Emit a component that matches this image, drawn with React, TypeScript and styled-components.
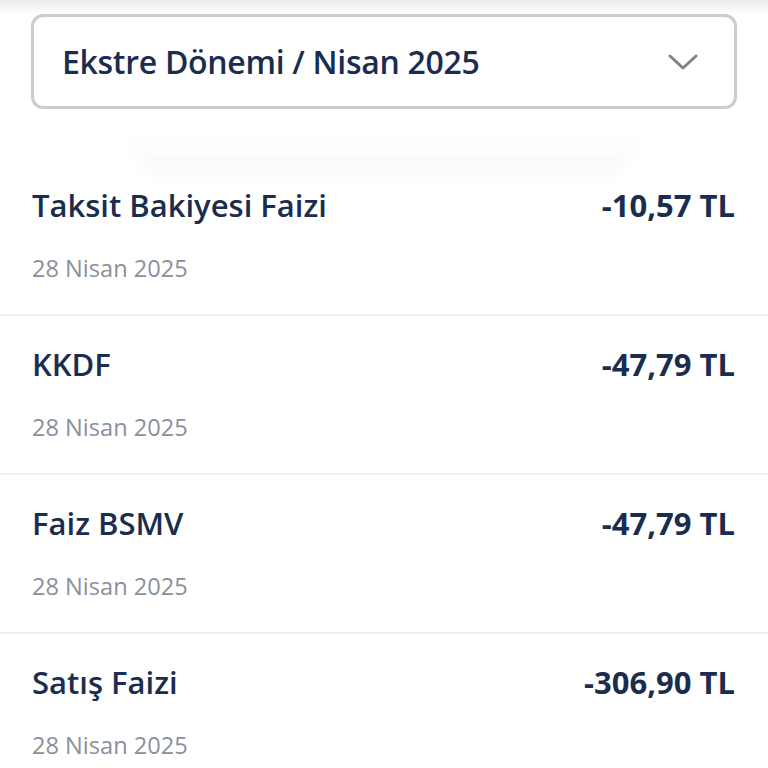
import React from "react";
import styled, { createGlobalStyle } from "styled-components";

const Global = createGlobalStyle`
  html, body { margin: 0; padding: 0; background: #ffffff; }
  body { font-family: "Open Sans", "Noto Sans", sans-serif; -webkit-font-smoothing: antialiased; }
`;

const Page = styled.div`
  width: 768px;
  height: 768px;
  overflow: hidden;
  background: #ffffff;
  position: relative;
`;

const TopShade = styled.div`
  position: absolute;
  left: 0;
  right: 0;
  top: 0;
  height: 16px;
  background: linear-gradient(#ededed, rgba(255, 255, 255, 0));
  pointer-events: none;
`;

const Header = styled.div`
  padding: 14px 31px 0 31px;
  position: relative;
  z-index: 1;
`;

const Select = styled.div`
  height: 95px;
  box-sizing: border-box;
  border: 3px solid #c9ccd0;
  border-radius: 12px;
  background: #ffffff;
  display: flex;
  align-items: center;
  justify-content: space-between;
  padding: 0 36px 0 28px;
`;

const SelectLabel = styled.span`
  font-size: 32px;
  font-weight: 600;
  color: #1b2d4f;
  letter-spacing: -0.3px;
`;

const ShadowStrip = styled.div`
  margin: 28px 128px -20px 128px;
  height: 40px;
  border-radius: 0 0 40px 40px;
  background: linear-gradient(rgba(253, 253, 253, 0.2), #f9f9f9);
  filter: blur(5px);
`;

const List = styled.div`
  display: flex;
  flex-direction: column;
  position: relative;
`;

const Row = styled.div<{ $last?: boolean }>`
  height: 159px;
  box-sizing: border-box;
  padding: 28px 33px 0 32px;
  border-bottom: ${(p) => (p.$last ? "none" : "2px solid #f0f1f3")};
  display: grid;
  grid-template-columns: 1fr auto;
  grid-template-rows: 40px auto;
  row-gap: 27px;
`;

const Title = styled.div`
  font-size: 31px;
  font-weight: 600;
  color: #1b2d4f;
  line-height: 40px;
`;

const Amount = styled.div`
  font-size: 31px;
  font-weight: 700;
  color: #1b2d4f;
  line-height: 40px;
  text-align: right;
`;

const DateText = styled.div`
  grid-column: 1 / span 2;
  font-size: 23.6px;
  font-weight: 400;
  color: #8a919b;
  line-height: 32px;
`;

const Chevron = () => (
  <svg width="30" height="18" viewBox="0 0 30 18" fill="none">
    <path d="M2 3 L15 15 L28 3" stroke="#7c848f" strokeWidth="3" strokeLinecap="round" strokeLinejoin="round" />
  </svg>
);

const items = [
  { title: "Taksit Bakiyesi Faizi", amount: "-10,57 TL", date: "28 Nisan 2025" },
  { title: "KKDF", amount: "-47,79 TL", date: "28 Nisan 2025" },
  { title: "Faiz BSMV", amount: "-47,79 TL", date: "28 Nisan 2025" },
  { title: "Satış Faizi", amount: "-306,90 TL", date: "28 Nisan 2025" },
];

export default function App() {
  return (
    <Page>
      <Global />
      <TopShade />
      <Header>
        <Select>
          <SelectLabel>Ekstre Dönemi / Nisan 2025</SelectLabel>
          <Chevron />
        </Select>
      </Header>
      <ShadowStrip />
      <List>
        {items.map((it, i) => (
          <Row key={i} $last={i === items.length - 1}>
            <Title>{it.title}</Title>
            <Amount>{it.amount}</Amount>
            <DateText>{it.date}</DateText>
          </Row>
        ))}
      </List>
    </Page>
  );
}
